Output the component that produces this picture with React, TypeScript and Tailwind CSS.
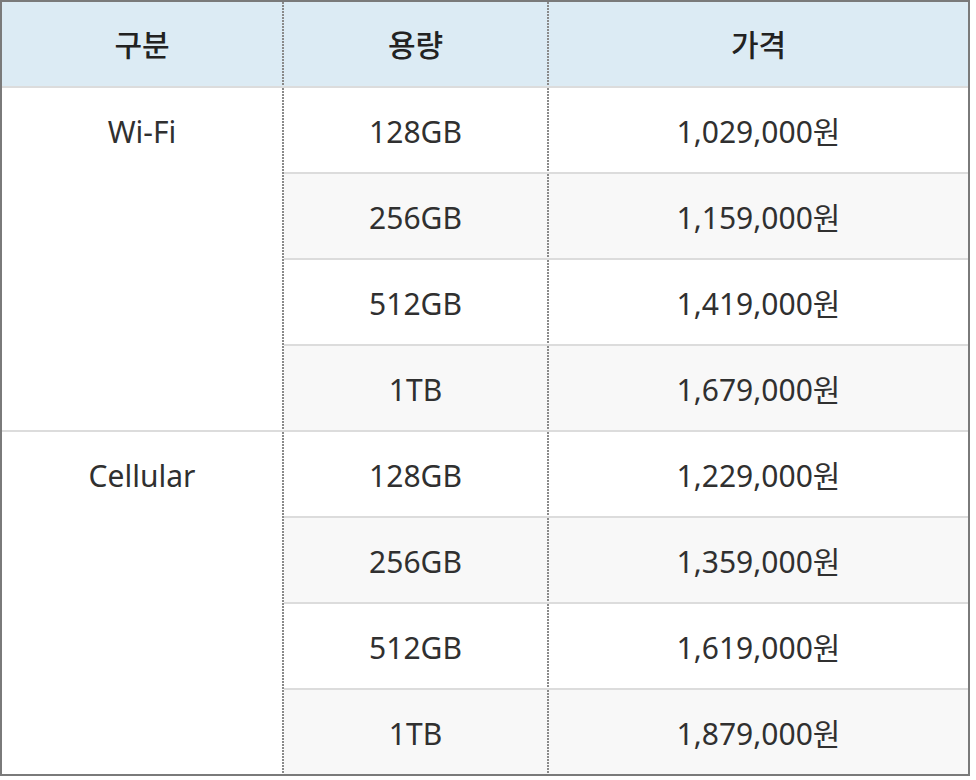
import React from "react";

const groups = [
  {
    name: "Wi-Fi",
    rows: [
      ["128GB", "1,029,000원"],
      ["256GB", "1,159,000원"],
      ["512GB", "1,419,000원"],
      ["1TB", "1,679,000원"],
    ],
  },
  {
    name: "Cellular",
    rows: [
      ["128GB", "1,229,000원"],
      ["256GB", "1,359,000원"],
      ["512GB", "1,619,000원"],
      ["1TB", "1,879,000원"],
    ],
  },
];

function Divider() {
  return (
    <div className="w-[2px] shrink-0 self-stretch bg-[repeating-linear-gradient(to_bottom,#8a8a8a_0px,#8a8a8a_2px,transparent_2px,transparent_3px)]" />
  );
}

export default function App() {
  return (
    <div
      className="bg-white text-[30px] leading-none text-[#303030]"
      style={{ fontFamily: '"Noto Sans", "Noto Sans CJK KR", sans-serif' }}
    >
      <div className="w-[970px] border-2 border-[#7a7a7a]">
        <div className="flex h-[86px] bg-[#dcebf4] font-medium text-[#222] border-b-2 border-[#dcdcdc]">
          <div className="w-[280px] flex items-center justify-center pt-[2px]">구분</div>
          <Divider />
          <div className="w-[263px] flex items-center justify-center pt-[2px]">용량</div>
          <Divider />
          <div className="flex-1 flex items-center justify-center pt-[2px]">가격</div>
        </div>
        {groups.map((g, gi) => (
          <div
            key={g.name}
            className={gi > 0 ? "flex border-t-2 border-[#dcdcdc]" : "flex"}
          >
            <div className="w-[280px] bg-white">
              <div className="h-[84px] flex items-center justify-center pt-[3px]">{g.name}</div>
            </div>
            <Divider />
            <div className="flex-1 flex flex-col">
              {g.rows.map((r, ri) => (
                <div
                  key={r[0]}
                  className={
                    "flex h-[84px] box-content " +
                    (ri % 2 === 1 ? "bg-[#f8f8f8] " : "bg-white ") +
                    (ri > 0 ? "border-t-2 border-[#dcdcdc]" : "")
                  }
                >
                  <div className="w-[263px] flex items-center justify-center pt-[3px]">{r[0]}</div>
                  <Divider />
                  <div className="flex-1 flex items-center justify-center pt-[3px]">{r[1]}</div>
                </div>
              ))}
            </div>
          </div>
        ))}
      </div>
    </div>
  );
}
